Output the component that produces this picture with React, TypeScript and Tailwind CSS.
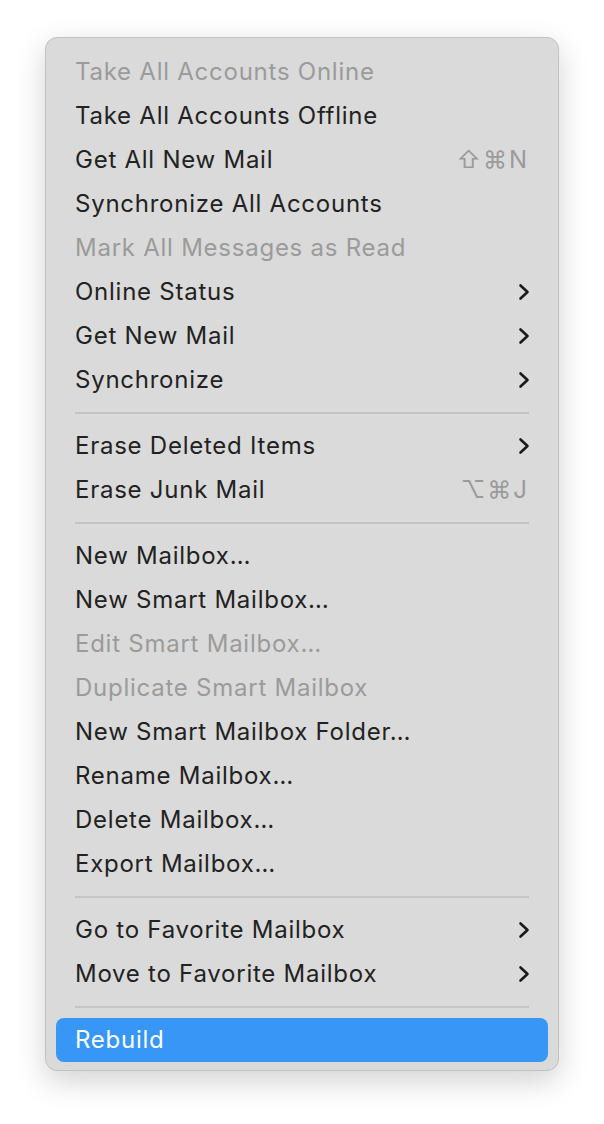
type Item =
  | { kind: "sep" }
  | {
      kind?: "item";
      label: string;
      disabled?: boolean;
      shortcut?: string;
      submenu?: boolean;
      active?: boolean;
    };

const items: Item[] = [
  { label: "Take All Accounts Online", disabled: true },
  { label: "Take All Accounts Offline" },
  { label: "Get All New Mail", shortcut: "⇧⌘N" },
  { label: "Synchronize All Accounts" },
  { label: "Mark All Messages as Read", disabled: true },
  { label: "Online Status", submenu: true },
  { label: "Get New Mail", submenu: true },
  { label: "Synchronize", submenu: true },
  { kind: "sep" },
  { label: "Erase Deleted Items", submenu: true },
  { label: "Erase Junk Mail", shortcut: "⌥⌘J" },
  { kind: "sep" },
  { label: "New Mailbox…" },
  { label: "New Smart Mailbox…" },
  { label: "Edit Smart Mailbox…", disabled: true },
  { label: "Duplicate Smart Mailbox", disabled: true },
  { label: "New Smart Mailbox Folder…" },
  { label: "Rename Mailbox…" },
  { label: "Delete Mailbox…" },
  { label: "Export Mailbox…" },
  { kind: "sep" },
  { label: "Go to Favorite Mailbox", submenu: true },
  { label: "Move to Favorite Mailbox", submenu: true },
  { kind: "sep" },
  { label: "Rebuild", active: true },
];

function Chevron() {
  return (
    <svg width="12" height="18" viewBox="0 0 12 18" fill="none">
      <path
        d="M2.5 2.5 L9.5 9 L2.5 15.5"
        stroke="#1a1a1a"
        strokeWidth="2.6"
        strokeLinecap="round"
        strokeLinejoin="round"
      />
    </svg>
  );
}

export default function App() {
  return (
    <div className="min-h-[1124px] w-[604px] bg-white pl-[45px] pt-[37px] font-['Inter','Liberation_Sans',sans-serif]">
      <div className="w-[514px] rounded-[12px] border border-[#c2c2c2] bg-[#dadada] px-[10px] pb-[8px] pt-[12px] shadow-[0_10px_30px_rgba(0,0,0,0.18)]">
        {items.map((it, i) =>
          it.kind === "sep" ? (
            <div key={i} className="flex h-[22px] items-center px-[19px]">
              <div className="h-[2px] w-full bg-[#c4c4c4]" />
            </div>
          ) : (
            <div
              key={i}
              className={
                "flex h-[44px] items-center justify-between rounded-[8px] px-[19px] text-[24px] " +
                (it.active
                  ? "bg-[#3796f6] text-white"
                  : it.disabled
                    ? "text-[#9b9b9b]"
                    : "text-[#222222]")
              }
            >
              <span className="tracking-[0.75px]">{it.label}</span>
              {it.shortcut && (
                <span className="tracking-[2px] text-[#9a9a9a]">
                  {it.shortcut}
                </span>
              )}
              {it.submenu && (
                <span className="mr-[-1px]">
                  <Chevron />
                </span>
              )}
            </div>
          )
        )}
      </div>
    </div>
  );
}
